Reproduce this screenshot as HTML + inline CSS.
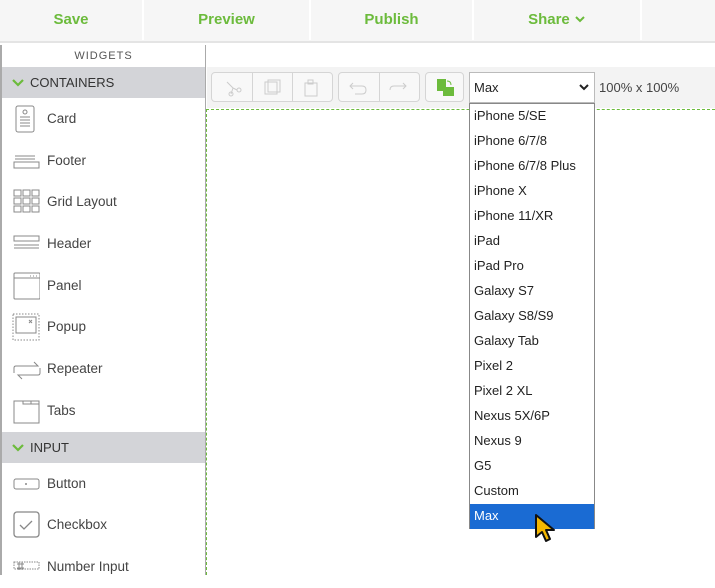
<!DOCTYPE html>
<html><head><style>
*{box-sizing:border-box;margin:0;padding:0}
body{width:715px;height:575px;overflow:hidden;background:#fff;font-family:"Segoe UI","Liberation Sans",sans-serif;position:relative;color:#333}
.top{position:absolute;left:0;top:0;width:715px;height:43px;background:#f6f6f6;border-bottom:2px solid #e4e4e4}
.tb{position:absolute;top:0;height:43px;line-height:40px;text-align:center;color:#6cbb3c;font-size:15px;font-weight:bold}
.sep{position:absolute;top:0;width:2px;height:40px;background:#fff}
.side{position:absolute;left:0;top:45px;width:206px;height:530px;border-left:2px solid #aaa;border-right:1px solid #aaa}
.wh{height:22px;text-align:center;font-size:11px;letter-spacing:1px;color:#555;line-height:22px}
.sec{height:31px;background:#d3d4d8;font-size:13px;line-height:31px;padding-left:10px;color:#333;position:relative}
.sec svg{position:absolute;left:10px;top:11px}
.sec span{margin-left:18px}
.it{height:41.7px;position:relative;font-size:13.5px;line-height:41.7px;padding-left:45px;color:#444}
.it svg{position:absolute;left:10px;top:7px}
.tool{position:absolute;left:207px;top:67px;width:508px;height:41px;background:#f3f3f3}
.g{position:absolute;top:5px;height:30px;border:1px solid #d5d5d5;border-radius:4px;background:#f8f8f8}
.dash{position:absolute;left:206px;top:109px;width:509px;height:1px;border-top:1px dashed #6cbb3c}
.vd{position:absolute;left:206px;top:109px;height:466px;border-left:1px dashed #6cbb3c}
.sel{position:absolute;left:469px;top:72px;width:126px;height:31px;border:1px solid #bbb;background:#fff;font-size:13px;line-height:29px;padding-left:4px;color:#222}
.dd{position:absolute;left:469px;top:103px;width:126px;height:426px;border:1px solid #888;background:#fff;font-size:13px;color:#222}
.dd div{height:25px;line-height:24px;padding-left:4px}
</style></head><body>
<div class="top">
<div class="tb" style="left:0;width:142px">Save</div><div class="sep" style="left:142px"></div>
<div class="tb" style="left:144px;width:165px">Preview</div><div class="sep" style="left:309px"></div>
<div class="tb" style="left:311px;width:161px">Publish</div><div class="sep" style="left:472px"></div>
<div class="tb" style="left:474px;width:166px">Share <svg width="12" height="10" viewBox="0 0 12 10"><path d="M2 3l4 4 4-4" stroke="#6cbb3c" stroke-width="2" fill="none"/></svg></div><div class="sep" style="left:640px"></div>
</div>
<div class="side">
<div class="wh">WIDGETS</div>
<div class="sec"><svg width="12" height="9"><path d="M1 2l5 5 5-5" stroke="#6cbb3c" stroke-width="2.2" fill="none"/></svg><span>CONTAINERS</span></div>
<div class="it"><svg width="26" height="28" fill="none" stroke="#888"><rect x="4" y="1" width="18" height="26" rx="2"/><circle cx="13" cy="7" r="2"/><path d="M8 12h10M8 15h10M8 18h10M8 21h10"/></svg>Card</div>
<div class="it"><svg width="28" height="26" fill="none" stroke="#888"><path d="M3 9h20M3 12h20"/><rect x="2" y="15" width="25" height="6"/></svg>Footer</div>
<div class="it"><svg width="28" height="28" fill="none" stroke="#888"><rect x="2" y="2" width="7" height="6"/><rect x="11" y="2" width="7" height="6"/><rect x="20" y="2" width="7" height="6"/><rect x="2" y="10" width="7" height="6"/><rect x="11" y="10" width="7" height="6"/><rect x="20" y="10" width="7" height="6"/><rect x="2" y="18" width="7" height="6"/><rect x="11" y="18" width="7" height="6"/><rect x="20" y="18" width="7" height="6"/></svg>Grid Layout</div>
<div class="it"><svg width="28" height="26" fill="none" stroke="#888"><rect x="2" y="6" width="25" height="5"/><path d="M2 15h25M2 18h25"/></svg>Header</div>
<div class="it"><svg width="28" height="28" fill="none" stroke="#888"><rect x="2" y="1" width="26" height="26" rx="1"/><path d="M2 6h26M18 4h1M21 4h1M24 4h1"/></svg>Panel</div>
<div class="it"><svg width="28" height="28" fill="none" stroke="#888"><rect x="1" y="1" width="26" height="26" stroke-dasharray="1.5 1.5"/><rect x="4" y="4" width="20" height="16"/><path d="M17 7l3 3M20 7l-3 3"/></svg>Popup</div>
<div class="it"><svg width="30" height="28" fill="none" stroke="#888"><path d="M2 18v-5q0-2 2-2h22l-4-4M28 13v5q0 2-2 2H6l4 4"/></svg>Repeater</div>
<div class="it"><svg width="28" height="28" fill="none" stroke="#888"><path d="M2 4h9v3h16v19H2zM11 4h8v3M19 4h8v3"/></svg>Tabs</div>
<div class="sec"><svg width="12" height="9"><path d="M1 2l5 5 5-5" stroke="#6cbb3c" stroke-width="2.2" fill="none"/></svg><span>INPUT</span></div>
<div class="it"><svg width="28" height="28" fill="none" stroke="#888"><rect x="2" y="9" width="25" height="10" rx="2"/><path d="M14 13v2M13 14h2"/></svg>Button</div>
<div class="it"><svg width="28" height="28" fill="none" stroke="#888" stroke-width="1.3"><rect x="2" y="1" width="25" height="25" rx="3"/><path d="M8 14l4 4 8-8"/></svg>Checkbox</div>
<div class="it"><svg width="28" height="28" fill="none" stroke="#888"><rect x="2" y="9" width="25" height="7" stroke-dasharray="1.5 1"/><path d="M7 9v8M10 9v8M5 11h7M5 15h7"/></svg>Number Input</div>
</div>
<div class="tool"></div>
<div class="g" style="left:211px;width:122px;top:72px"><div style="position:absolute;left:40px;top:0;width:1px;height:28px;background:#d5d5d5"></div><div style="position:absolute;left:80px;top:0;width:1px;height:28px;background:#d5d5d5"></div>
<svg style="position:absolute;left:10px;top:5px" width="100" height="20" fill="none" stroke="#ccc"><path d="M5 4l6 6M11 10l-2 6M11 10l4 2"/><circle cx="9" cy="16" r="2"/><circle cx="17" cy="12" r="2"/><rect x="43" y="4" width="12" height="12"/><rect x="46" y="2" width="12" height="12"/><rect x="83" y="5" width="12" height="13"/><rect x="86" y="2" width="5" height="4"/></svg></div>
<div class="g" style="left:338px;width:82px;top:72px"><div style="position:absolute;left:40px;top:0;width:1px;height:28px;background:#d5d5d5"></div>
<svg style="position:absolute;left:8px;top:6px" width="70" height="18" fill="none" stroke="#ccc"><path d="M6 4l-3 3 3 3M3 7h12q4 0 4 4t-4 4H8M56 4l3 3-3 3M59 7H47q-4 0-4 4"/></svg></div>
<div class="g" style="left:425px;width:39px;top:72px"><svg style="position:absolute;left:10px;top:5px" width="20" height="20"><rect x="1" y="1" width="9" height="12" fill="#6cbb3c"/><rect x="7" y="9" width="11" height="9" fill="#6cbb3c"/><path d="M11 3q4 0 4 4" stroke="#6cbb3c" fill="none"/></svg></div>
<div class="sel">Max<svg style="position:absolute;right:4px;top:10px" width="12" height="10"><path d="M2 2l4 4 4-4" stroke="#222" stroke-width="2" fill="none"/></svg></div>
<div style="position:absolute;left:599px;top:80px;font-size:13px;color:#444">100% x 100%</div>
<div class="dash"></div><div class="vd"></div>
<div class="dd">
<div>iPhone 5/SE</div><div>iPhone 6/7/8</div><div>iPhone 6/7/8 Plus</div><div>iPhone X</div><div>iPhone 11/XR</div><div>iPad</div><div>iPad Pro</div><div>Galaxy S7</div><div>Galaxy S8/S9</div><div>Galaxy Tab</div><div>Pixel 2</div><div>Pixel 2 XL</div><div>Nexus 5X/6P</div><div>Nexus 9</div><div>G5</div><div>Custom</div><div style="background:#1a6bd3;color:#fff">Max</div></div>
<svg style="position:absolute;left:533px;top:513px" width="26" height="32"><path d="M3 2v22l6-5 4 9 4-2-4-9h8z" fill="#f5b800" stroke="#111" stroke-width="2" stroke-linejoin="round"/></svg>
</body></html>
